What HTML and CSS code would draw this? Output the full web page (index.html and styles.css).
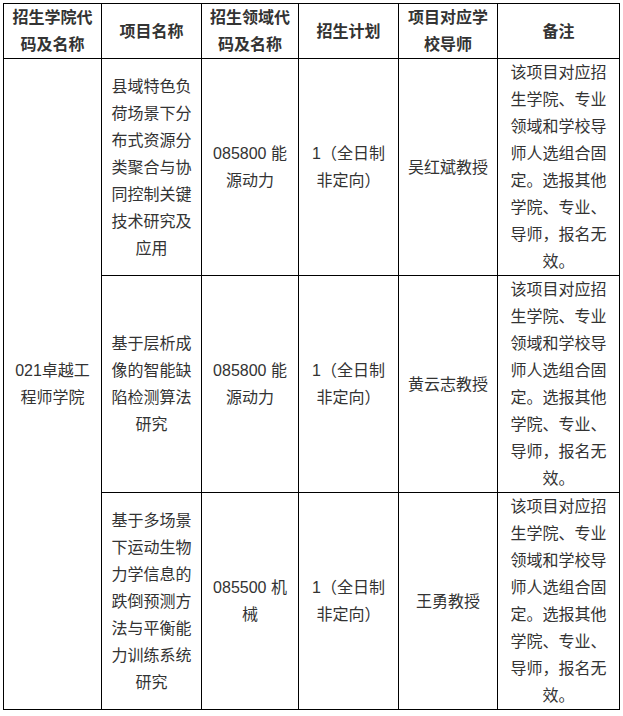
FILE: index.html
```html
<!DOCTYPE html>
<html lang="zh-CN">
<head>
<meta charset="utf-8">
<link rel="stylesheet" href="styles.css">
</head>
<body>
<table class="plan">
  <colgroup>
    <col class="c1"><col class="c2"><col class="c3"><col class="c4"><col class="c5"><col class="c6">
  </colgroup>
  <thead>
    <tr>
      <th>招生学院代码及名称</th>
      <th>项目名称</th>
      <th>招生领域代码及名称</th>
      <th>招生计划</th>
      <th>项目对应学校导师</th>
      <th>备注</th>
    </tr>
  </thead>
  <tbody>
    <tr>
      <td rowspan="3">021卓越工程师学院</td>
      <td>县域特色负荷场景下分布式资源分类聚合与协同控制关键技术研究及应用</td>
      <td>085800 能源动力</td>
      <td>1（全日制非定向）</td>
      <td>吴红斌教授</td>
      <td>该项目对应招生学院、专业领域和学校导师人选组合固定。选报其他学院、专业、导师，报名无效。</td>
    </tr>
    <tr>
      <td>基于层析成像的智能缺陷检测算法研究</td>
      <td>085800 能源动力</td>
      <td>1（全日制非定向）</td>
      <td>黄云志教授</td>
      <td>该项目对应招生学院、专业领域和学校导师人选组合固定。选报其他学院、专业、导师，报名无效。</td>
    </tr>
    <tr>
      <td>基于多场景下运动生物力学信息的跌倒预测方法与平衡能力训练系统研究</td>
      <td>085500 机械</td>
      <td>1（全日制非定向）</td>
      <td>王勇教授</td>
      <td>该项目对应招生学院、专业领域和学校导师人选组合固定。选报其他学院、专业、导师，报名无效。</td>
    </tr>
  </tbody>
</table>
</body>
</html>
```

FILE: styles.css
```css
html, body {
  margin: 0;
  padding: 0;
  background: #fff;
}
body {
  padding: 3px 0 0 3px;
  font-family: "Liberation Sans", "Noto Sans CJK SC", sans-serif;
  font-size: 16px;
  color: #333;
}
.plan {
  border-collapse: collapse;
  table-layout: fixed;
  width: 616px;
}
.c1 { width: 98px; }
.c2 { width: 100px; }
.c3 { width: 97px; }
.c4 { width: 100px; }
.c5 { width: 99px; }
.c6 { width: 122px; }
.plan th,
.plan td {
  border: 1px solid #000;
  padding: 0 7px;
  line-height: 27px;
  text-align: center;
  vertical-align: middle;
  word-break: break-all;
}
.plan th {
  font-weight: bold;
  color: #333;
}
```
